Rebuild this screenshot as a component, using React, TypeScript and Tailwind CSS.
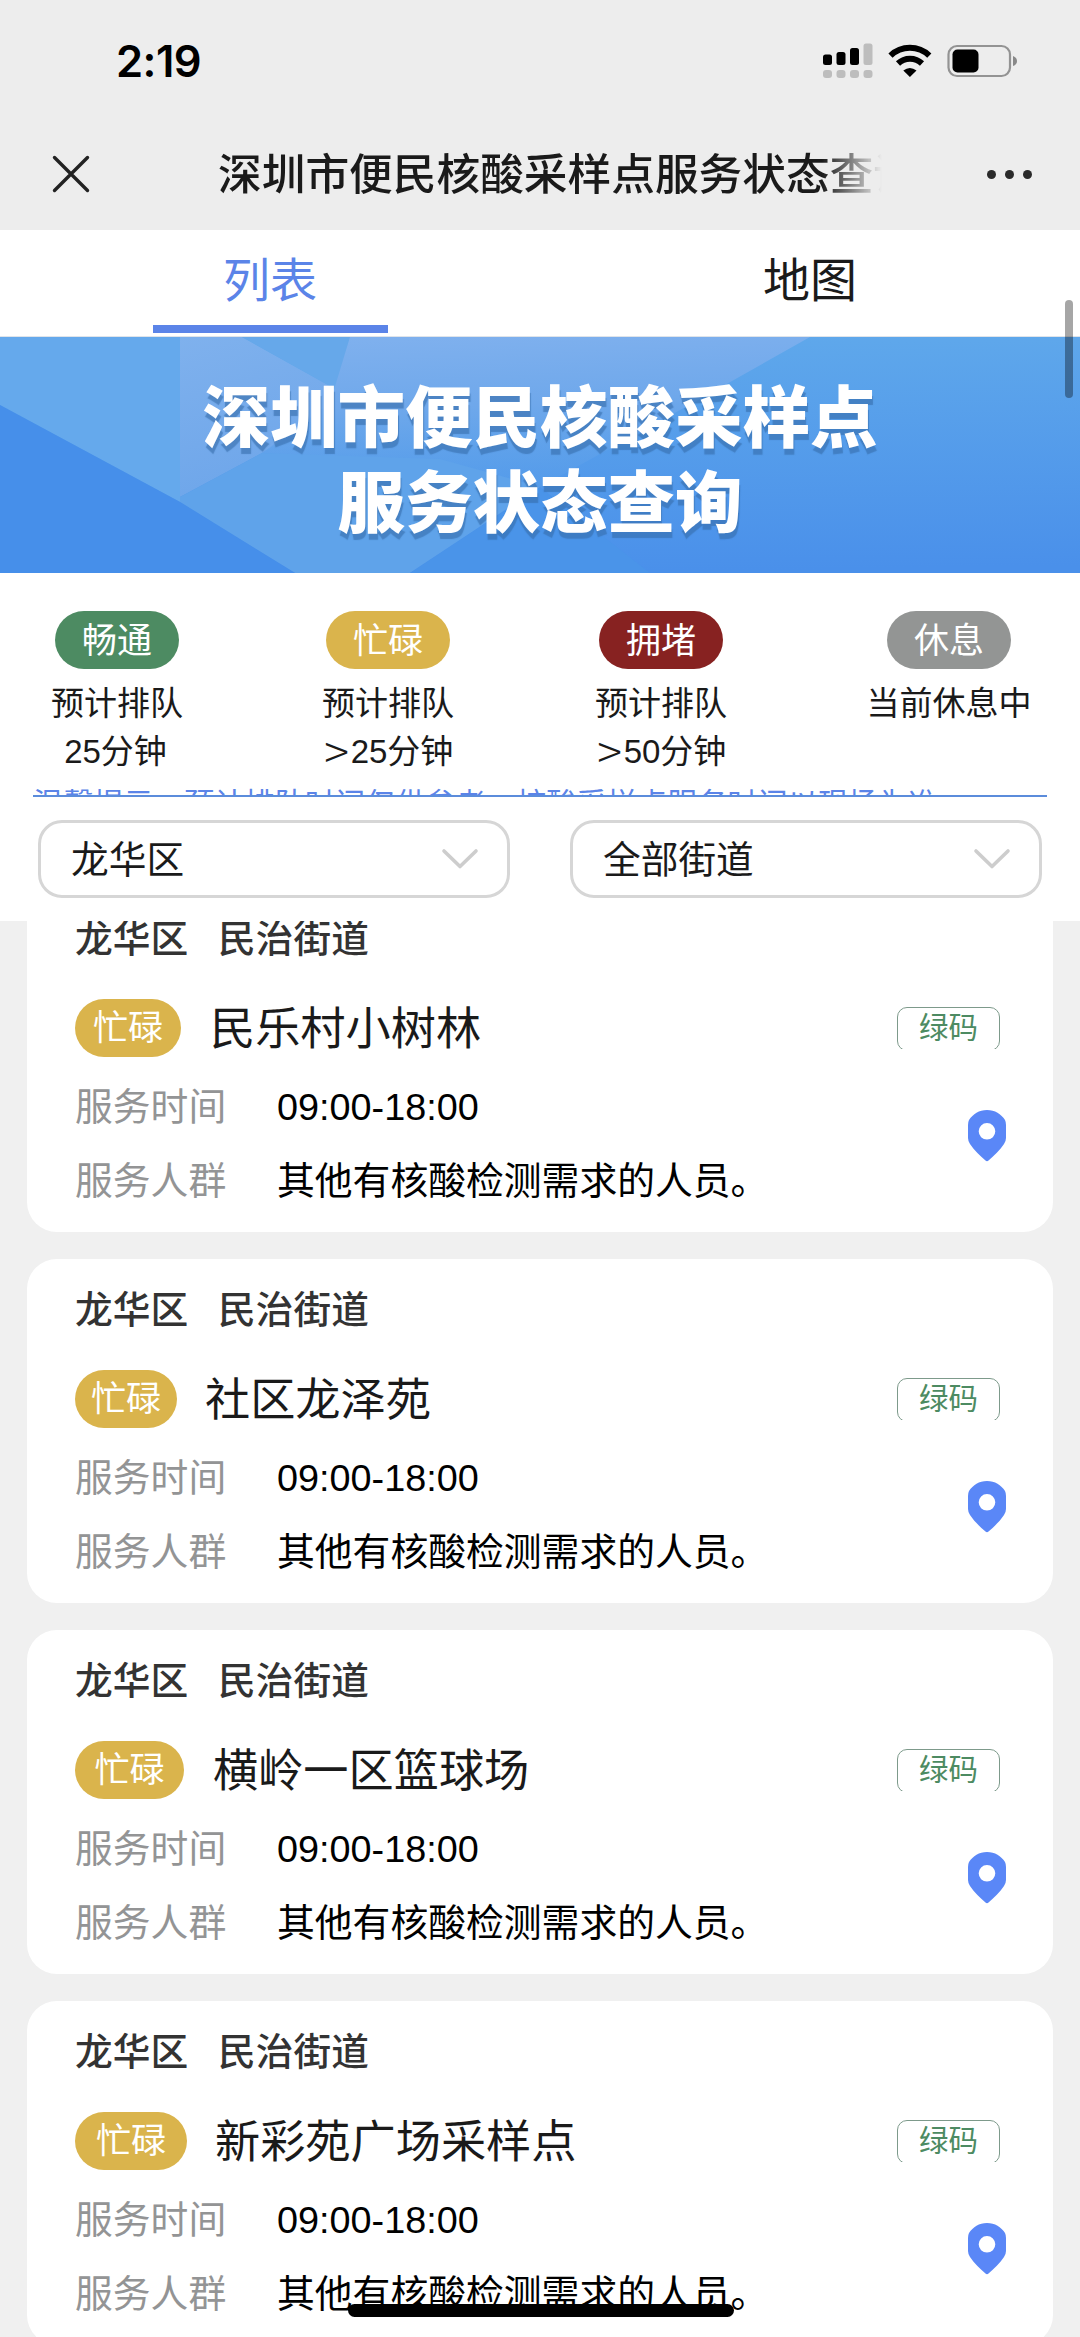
import React from 'react';

type Level = {
    label: string;
    color: string;
    left: string;
    lines: React.ReactNode[];
};

type Site = {
    name: string;
    pill: string;
};

const levels: Level[] = [
    { label: '畅通', color: 'bg-[#4d8b62]', left: 'ml-[17px]', lines: ['预计排队', <span key="a" className="pr-[3px]">25分钟</span>] },
    { label: '忙碌', color: 'bg-[#dab44c]', left: 'ml-[71px]', lines: ['预计排队', <Over key="b" value="25分钟" />] },
    { label: '拥堵', color: 'bg-[#872221]', left: 'ml-[73px]', lines: ['预计排队', <Over key="c" value="50分钟" />] },
    { label: '休息', color: 'bg-[#939594]', left: 'ml-[88px]', lines: ['当前休息中'] },
];

const sites: Site[] = [
    { name: '民乐村小树林', pill: 'w-[106px] mr-[29px]' },
    { name: '社区龙泽苑', pill: 'w-[102px] mr-[28px]' },
    { name: '横岭一区篮球场', pill: 'w-[109px] mr-[29px]' },
    { name: '新彩苑广场采样点', pill: 'w-[112px] mr-[28px]' },
];

function Over({ value }: { value: string }) {
    return (
        <span className="inline-flex items-center">
            <span className="w-[28px] h-[48px] text-[46px] leading-[42px] font-['Noto_Sans_CJK_SC',sans-serif] font-light">&gt;</span>
            {value}
        </span>
    );
}

const StatusBar: React.FC = () => (
    <div className="h-[118px] pt-[36px] pl-[116px] pr-[63px] flex justify-between">
        <div className="text-[43.500px] leading-[50px] font-semibold tracking-[-0.5px] text-black font-['Inter',sans-serif]">2:19</div>
        <svg className="mt-[6px]" width="196" height="40" viewBox="0 0 196 40">
            {/* Signal */}
            <g fill="#000">
                <rect x="2" y="12.500" width="9" height="10.500" rx="2.5" />
                <rect x="15.5" y="10" width="9" height="13" rx="2.5" />
                <rect x="29" y="6" width="9" height="17" rx="2.5" />
            </g>
            <g fill="#bdbdbd">
                <rect x="42.5" y="1.5" width="9" height="21.5" rx="2.5" />
                <rect x="2" y="28" width="9" height="8" rx="3" />
                <rect x="15.5" y="28" width="9" height="8" rx="3" />
                <rect x="29" y="28" width="9" height="8" rx="3" />
                <rect x="42.5" y="28" width="9" height="8" rx="3" />
            </g>
            {/* Wifi */}
            <g fill="none" stroke="#000" strokeWidth="6">
                <path d="M69.500 13.600a28 28 0 0 1 38.800 0" />
                <path d="M77 21.500a17.500 17.500 0 0 1 24 0" />
            </g>
            <path d="M82.300 28.500q6.600-5 13.200 0L88.900 35z" fill="#000" />
            {/* Battery */}
            <rect x="127.500" y="4" width="61.500" height="30" rx="8.500" fill="none" stroke="#939393" strokeWidth="2.200" />
            <rect x="131.500" y="7.500" width="26" height="23" rx="5" fill="#000" />
            <path d="M192 14q4 1.500 4 5t-4 5z" fill="#888" />
        </svg>
    </div>
);

const NavBar: React.FC = () => (
    <div className="h-[112px] flex items-center">
        <svg className="ml-[52px]" width="38" height="38" viewBox="0 0 38 38" stroke="#222" strokeWidth="3.400" strokeLinecap="round">
            <path d="M2.500 2.500l33 33M35.500 2.500l-33 33" />
        </svg>
        <h1 className="ml-[128px] w-[666px] overflow-hidden whitespace-nowrap pt-[2px] text-[43.700px] leading-[60px] font-medium text-[#1a1a1a] [mask-image:linear-gradient(to_right,#000_604px,transparent_664px)]">
            深圳市便民核酸采样点服务状态查询
        </h1>
        <div className="ml-[103px] flex gap-[9px]">
            <i className="w-[9px] h-[9px] rounded-full bg-[#2a2a2a]" />
            <i className="w-[9px] h-[9px] rounded-full bg-[#2a2a2a]" />
            <i className="w-[9px] h-[9px] rounded-full bg-[#2a2a2a]" />
        </div>
    </div>
);

const Tabs: React.FC = () => (
    <nav className="h-[107px] flex bg-white text-[47px] leading-[102px] text-center border-b border-[#dfe4ea]">
        <div className="flex-1 flex flex-col items-center text-[#5b84e8]">
            <span className="h-[95px]">列表</span>
            <span className="w-[235px] h-[8px] bg-[#5b84e8]" />
        </div>
        <div className="flex-1 text-[#1a1a1a]">地图</div>
    </nav>
);

const Banner: React.FC = () => (
    <section className="relative h-[236px] overflow-hidden">
        <svg className="absolute inset-0" width="1080" height="236" viewBox="0 0 1080 236">
            <defs>
                <linearGradient id="base" x1="0.4" y1="0" x2="0.46" y2="1">
                    <stop offset="0" stopColor="#5fa8eb" />
                    <stop offset="1" stopColor="#4a90ea" />
                </linearGradient>
                <linearGradient id="glow" x1="0" y1="0" x2="0.3" y2="1">
                    <stop offset="0" stopColor="#7fb1ed" />
                    <stop offset="1" stopColor="#6ea6ea" />
                </linearGradient>
                <linearGradient id="fade" x1="0" y1="0" x2="0.15" y2="1">
                    <stop offset="0" stopColor="#80b1ee" />
                    <stop offset="0.5" stopColor="#6fa8eb" />
                    <stop offset="1" stopColor="#5a9fea" stopOpacity="0.5" />
                </linearGradient>
            </defs>
            <rect width="1080" height="236" fill="url(#base)" />
            <path d="M0 0H180V165L0 68z" fill="#65a9ec" />
            <path d="M180 0H242L350 60 262 116 180 160z" fill="url(#glow)" />
            <path d="M242 0H360V66z" fill="#66a8ea" />
            <path d="M350 0H810L700 62 540 150 430 128 262 116 330 66z" fill="url(#fade)" />
            <path d="M180 160L262 116 440 122 540 150 410 236H295L180 165z" fill="#5fa3ea" />
            <path d="M0 68L180 165 295 236H0z" fill="#468fea" />
            <path d="M410 236L540 150 650 236z" fill="#4a94e9" />
        </svg>
        <h2 className="relative pt-[40px] text-center text-[67.500px] leading-[84.500px] font-black text-white [text-shadow:1px_6px_1px_rgba(54,108,170,0.6)]">
            深圳市便民核酸采样点
            <br />
            服务状态查询
        </h2>
    </section>
);

const Legend: React.FC = () => (
    <section className="h-[215px] pt-[38px] flex items-start text-[#1a1a1a]">
        {levels.map((level) => (
            <div key={level.label} className={`${level.left} w-[200px] flex flex-col items-center`}>
                <span className={`${level.color} w-[124px] h-[58px] rounded-full text-center text-[35px] leading-[60px] text-white`}>{level.label}</span>
                <div className="pt-[11px] text-[33px] leading-[48px] text-center whitespace-nowrap">
                    {level.lines.map((line, i) => (
                        <div key={i} className="h-[48px]">{line}</div>
                    ))}
                </div>
            </div>
        ))}
    </section>
);

const Select: React.FC<{ value: string }> = ({ value }) => (
    <div className="w-[472px] h-[78px] pl-[30px] pr-[28px] flex items-center justify-between border-3 border-[#d6d6d6] rounded-[24px] bg-white">
        <span className="pt-[1px] text-[37.700px] leading-[72px] text-[#1a1a1a]">{value}</span>
        <svg width="38" height="22" viewBox="0 0 38 22" fill="none" stroke="#cdcdcd" strokeWidth="3.600" strokeLinecap="round" strokeLinejoin="round">
            <path d="M3 3l16 15.500L35 3" />
        </svg>
    </div>
);

const Pin: React.FC = () => (
    <svg width="38" height="52" viewBox="0 0 38 52">
        <path fill="#5a87f7" fillRule="evenodd" d="M19 0C27 0 33 4 37 10Q38 12 38 15V28Q38 31 36 34C32 40 26 46 20.500 50.500Q19 52 17.500 50.500C12 46 6 40 2 34Q0 31 0 28V15Q0 12 1 10C5 4 11 0 19 0zM19 13a8.300 8.300 0 1 0 0 16.600 8.300 8.300 0 0 0 0-16.600z" />
    </svg>
);

const SiteCard: React.FC<{ site: Site }> = ({ site }) => (
    <article className="h-[343.500px] pl-[48px] pr-[47px] rounded-[30px] bg-white">
        <div className="h-[111px] pt-[22px] flex gap-[30px] text-[37.700px] leading-[58px] font-medium text-[#333]">
            <span>龙华区</span>
            <span>民治街道</span>
        </div>
        <div className="h-[58px] flex items-center">
            <span className={`${site.pill} h-[58px] rounded-full bg-[#dab44c] text-center text-[35px] leading-[57px] text-white`}>忙碌</span>
            <span className="flex-1 pt-[4px] text-[45.200px] leading-[58px] text-[#1a1a1a]">{site.name}</span>
            <span className="mr-[6px] h-[42px] overflow-hidden">
                <span className="block w-[103px] h-[44px] border border-[#7d9a8b] rounded-[10px] text-center text-[29.500px] leading-[40px] text-[#4d8b62]">绿码</span>
            </span>
        </div>
        <div className="flex justify-between pt-[14px]">
            <dl className="grid grid-cols-[202px_auto] text-[37.800px] leading-[73.500px] text-black">
                <dt className="text-[#939495]">服务时间</dt>
                <dd>09:00-18:00</dd>
                <dt className="text-[#939495]">服务人群</dt>
                <dd>其他有核酸检测需求的人员。</dd>
            </dl>
            <div className="pt-[39px]">
                <Pin />
            </div>
        </div>
    </article>
);

export default function App() {
    return (
        <div className="relative w-[1080px] h-[2337px] overflow-hidden bg-[#f0f0f0] font-['Liberation_Sans','Noto_Sans_CJK_SC',sans-serif]">
            <header className="h-[230px] bg-[#ededed]">
                <StatusBar />
                <NavBar />
            </header>
            <div className="h-[691px] bg-white">
                <Tabs />
                <Banner />
                <Legend />
                {/* Notice, collapsed to a sliver above the filters */}
                <div className="mx-[33px] h-[9px] overflow-hidden border-b-2 border-[#5b8cdb] text-[30.200px] leading-[34px] whitespace-nowrap text-[#5b84e8]">
                    温馨提示：预计排队时间仅供参考，核酸采样点服务时间以现场为准
                </div>
                <div className="pt-[23px] px-[38px] flex justify-between">
                    <Select value="龙华区" />
                    <Select value="全部街道" />
                </div>
            </div>
            <main className="h-[1416px] px-[27px] overflow-hidden">
                <div className="-mt-[33px] flex flex-col gap-[27.500px]">
                    {sites.map((site) => (
                        <SiteCard key={site.name} site={site} />
                    ))}
                </div>
            </main>
            {/* Scrollbar and home indicator */}
            <div className="absolute right-[7px] top-[300px] w-[8px] h-[98px] rounded-full bg-black/35" />
            <div className="absolute left-[348px] bottom-[20px] w-[386px] h-[13px] rounded-full bg-black" />
        </div>
    );
}
